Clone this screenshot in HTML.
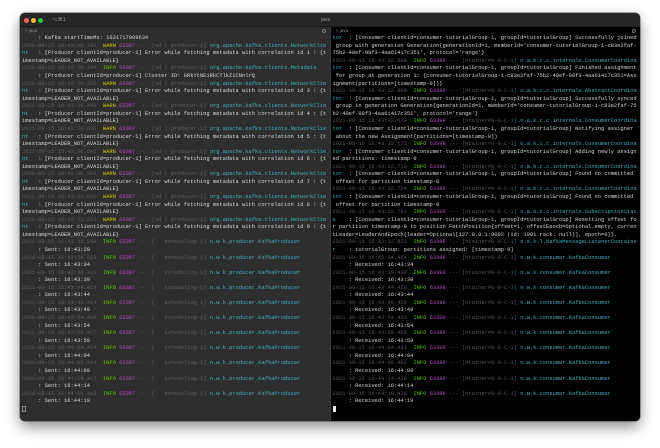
<!DOCTYPE html>
<html><head><meta charset="utf-8">
<style>
*{margin:0;padding:0;box-sizing:border-box}
html,body{width:660px;height:448px;background:#fff;overflow:hidden}
.win{position:absolute;left:20px;top:13px;width:620px;height:408px;border-radius:5px;overflow:hidden;background:#2e2e2e;box-shadow:0 6px 14px rgba(0,0,0,.45),0 0 0 .5px rgba(0,0,0,.6)}
.title{position:absolute;left:0;top:0;width:620px;height:14px;background:#262626;border-bottom:1px solid #1a1a1a}
.dot{position:absolute;top:4.5px;width:5px;height:5px;border-radius:50%}
.t{font-family:"Liberation Sans",sans-serif;color:#999;position:absolute;font-size:5px;top:3.5px}
.pane{position:absolute;top:14px;height:394px;width:310px;overflow:hidden}
.pl{left:0;background:#2e2e2e}
.pr{left:310px;background:#000;border-left:1px solid #3a3a3a}
.tab{position:absolute;top:0;left:0;right:0;height:8px;font-family:"Liberation Sans",sans-serif;font-size:4.5px;color:#888;padding-left:5px;line-height:8px}
.gear{position:absolute;top:2px;right:4px;width:4px;height:4px;border:.7px solid #777;border-radius:50%}
.txt{position:absolute;top:8.2px;font-family:"Liberation Mono",monospace;font-size:5.4px;line-height:7.57px;white-space:pre;color:#d4d4d4}
.pl .txt{left:2px}
.pr .txt{left:1.5px}
.d{color:#5c5c5c}.pr .d{color:#575757}
.w{color:#c8c800}.i{color:#5cc800}.p{color:#b04cc4}.c{color:#3cb0b8}
.cur1{display:inline-block;width:3.5px;height:6.5px;border:.7px solid #888;vertical-align:middle}
.cur2{display:inline-block;width:3.2px;height:6.5px;background:#e8e8e8;vertical-align:middle}
</style></head><body>
<div class="win">
 <div class="title">
  <div class="dot" style="left:4px;background:#ff5f57"></div>
  <div class="dot" style="left:11px;background:#febc2e"></div>
  <div class="dot" style="left:18px;background:#28c840"></div>
  <div class="t" style="left:32px">⌥⌘1</div>
  <div class="t" style="left:301px">java</div>
 </div>
 <div class="pane pl">
  <div class="tab">× java</div><div class="gear"></div>
<div class="txt">&#160;&#160;&#160;&#160;&#160;: Kafka startTimeMs: 1631717009634
<span class="d">2021-09-15 16:43:30.182 </span> <span class="w">WARN</span> <span class="p">63397</span> <span class="d">--- [ad | producer-1]</span> <span class="c">org.apache.kafka.clients.NetworkClie</span>
<span class="c">nt</span>&#160;&#160; : [Producer clientId=producer-1] Error while fetching metadata with correlation id 1 : {t
imestamp=LEADER_NOT_AVAILABLE}
<span class="d">2021-09-15 16:43:30.184 </span> <span class="i">INFO</span> <span class="p">63397</span> <span class="d">--- [ad | producer-1]</span> <span class="c">org.apache.kafka.clients.Metadata</span>
&#160;&#160;&#160;&#160;&#160;: [Producer clientId=producer-1] Cluster ID: GRkYtNE1RkCTlkZ1CNnlrQ
<span class="d">2021-09-15 16:43:30.320 </span> <span class="w">WARN</span> <span class="p">63397</span> <span class="d">--- [ad | producer-1]</span> <span class="c">org.apache.kafka.clients.NetworkClie</span>
<span class="c">nt</span>&#160;&#160; : [Producer clientId=producer-1] Error while fetching metadata with correlation id 3 : {t
imestamp=LEADER_NOT_AVAILABLE}
<span class="d">2021-09-15 16:43:30.449 </span> <span class="w">WARN</span> <span class="p">63397</span> <span class="d">--- [ad | producer-1]</span> <span class="c">org.apache.kafka.clients.NetworkClie</span>
<span class="c">nt</span>&#160;&#160; : [Producer clientId=producer-1] Error while fetching metadata with correlation id 4 : {t
imestamp=LEADER_NOT_AVAILABLE}
<span class="d">2021-09-15 16:43:30.696 </span> <span class="w">WARN</span> <span class="p">63397</span> <span class="d">--- [ad | producer-1]</span> <span class="c">org.apache.kafka.clients.NetworkClie</span>
<span class="c">nt</span>&#160;&#160; : [Producer clientId=producer-1] Error while fetching metadata with correlation id 5 : {t
imestamp=LEADER_NOT_AVAILABLE}
<span class="d">2021-09-15 16:43:30.842 </span> <span class="w">WARN</span> <span class="p">63397</span> <span class="d">--- [ad | producer-1]</span> <span class="c">org.apache.kafka.clients.NetworkClie</span>
<span class="c">nt</span>&#160;&#160; : [Producer clientId=producer-1] Error while fetching metadata with correlation id 6 : {t
imestamp=LEADER_NOT_AVAILABLE}
<span class="d">2021-09-15 16:43:30.963 </span> <span class="w">WARN</span> <span class="p">63397</span> <span class="d">--- [ad | producer-1]</span> <span class="c">org.apache.kafka.clients.NetworkClie</span>
<span class="c">nt</span>&#160;&#160; : [Producer clientId=producer-1] Error while fetching metadata with correlation id 7 : {t
imestamp=LEADER_NOT_AVAILABLE}
<span class="d">2021-09-15 16:43:31.096 </span> <span class="w">WARN</span> <span class="p">63397</span> <span class="d">--- [ad | producer-1]</span> <span class="c">org.apache.kafka.clients.NetworkClie</span>
<span class="c">nt</span>&#160;&#160; : [Producer clientId=producer-1] Error while fetching metadata with correlation id 8 : {t
imestamp=LEADER_NOT_AVAILABLE}
<span class="d">2021-09-15 16:43:31.213 </span> <span class="w">WARN</span> <span class="p">63397</span> <span class="d">--- [ad | producer-1]</span> <span class="c">org.apache.kafka.clients.NetworkClie</span>
<span class="c">nt</span>&#160;&#160; : [Producer clientId=producer-1] Error while fetching metadata with correlation id 9 : {t
imestamp=LEADER_NOT_AVAILABLE}
<span class="d">2021-09-15 16:43:31.349 </span> <span class="i">INFO</span> <span class="p">63397</span> <span class="d">--- [&#160;&#160; scheduling-1]</span> <span class="c">n.w.k.producer.KafkaProducer</span>
&#160;&#160;&#160;&#160;&#160;: Sent: 16:43:29
<span class="d">2021-09-15 16:43:34.413 </span> <span class="i">INFO</span> <span class="p">63397</span> <span class="d">--- [&#160;&#160; scheduling-1]</span> <span class="c">n.w.k.producer.KafkaProducer</span>
&#160;&#160;&#160;&#160;&#160;: Sent: 16:43:34
<span class="d">2021-09-15 16:43:39.416 </span> <span class="i">INFO</span> <span class="p">63397</span> <span class="d">--- [&#160;&#160; scheduling-1]</span> <span class="c">n.w.k.producer.KafkaProducer</span>
&#160;&#160;&#160;&#160;&#160;: Sent: 16:43:39
<span class="d">2021-09-15 16:43:44.413 </span> <span class="i">INFO</span> <span class="p">63397</span> <span class="d">--- [&#160;&#160; scheduling-1]</span> <span class="c">n.w.k.producer.KafkaProducer</span>
&#160;&#160;&#160;&#160;&#160;: Sent: 16:43:44
<span class="d">2021-09-15 16:43:49.414 </span> <span class="i">INFO</span> <span class="p">63397</span> <span class="d">--- [&#160;&#160; scheduling-1]</span> <span class="c">n.w.k.producer.KafkaProducer</span>
&#160;&#160;&#160;&#160;&#160;: Sent: 16:43:49
<span class="d">2021-09-15 16:43:54.416 </span> <span class="i">INFO</span> <span class="p">63397</span> <span class="d">--- [&#160;&#160; scheduling-1]</span> <span class="c">n.w.k.producer.KafkaProducer</span>
&#160;&#160;&#160;&#160;&#160;: Sent: 16:43:54
<span class="d">2021-09-15 16:43:59.417 </span> <span class="i">INFO</span> <span class="p">63397</span> <span class="d">--- [&#160;&#160; scheduling-1]</span> <span class="c">n.w.k.producer.KafkaProducer</span>
&#160;&#160;&#160;&#160;&#160;: Sent: 16:43:59
<span class="d">2021-09-15 16:44:04.414 </span> <span class="i">INFO</span> <span class="p">63397</span> <span class="d">--- [&#160;&#160; scheduling-1]</span> <span class="c">n.w.k.producer.KafkaProducer</span>
&#160;&#160;&#160;&#160;&#160;: Sent: 16:44:04
<span class="d">2021-09-15 16:44:09.414 </span> <span class="i">INFO</span> <span class="p">63397</span> <span class="d">--- [&#160;&#160; scheduling-1]</span> <span class="c">n.w.k.producer.KafkaProducer</span>
&#160;&#160;&#160;&#160;&#160;: Sent: 16:44:09
<span class="d">2021-09-15 16:44:14.417 </span> <span class="i">INFO</span> <span class="p">63397</span> <span class="d">--- [&#160;&#160; scheduling-1]</span> <span class="c">n.w.k.producer.KafkaProducer</span>
&#160;&#160;&#160;&#160;&#160;: Sent: 16:44:14
<span class="d">2021-09-15 16:44:19.415 </span> <span class="i">INFO</span> <span class="p">63397</span> <span class="d">--- [&#160;&#160; scheduling-1]</span> <span class="c">n.w.k.producer.KafkaProducer</span>
&#160;&#160;&#160;&#160;&#160;: Sent: 16:44:19
<span class="cur1"></span></div>
 </div>
 <div class="pane pr">
  <div class="tab">× java</div><div class="gear"></div>
<div class="txt"><span class="c">tor</span>&#160; : [Consumer clientId=consumer-tutorialGroup-1, groupId=tutorialGroup] Successfully joined
&#160;group with generation Generation{generationId=1, memberId='consumer-tutorialGroup-1-c83e2faf-
75b2-40ef-98f3-4aa61417c351', protocol='range'}
<span class="d">2021-09-15 16:43:32.608 </span> <span class="i">INFO</span> <span class="p">63398</span> <span class="d">--- [ntainer#0-0-C-1]</span> <span class="c">o.a.k.c.c.internals.ConsumerCoordina</span>
<span class="c">tor</span>&#160; : [Consumer clientId=consumer-tutorialGroup-1, groupId=tutorialGroup] Finished assignment
&#160;for group at generation 1: {consumer-tutorialGroup-1-c83e2faf-75b2-40ef-98f3-4aa61417c351=Ass
ignment(partitions=[timestamp-0])}
<span class="d">2021-09-15 16:43:32.669 </span> <span class="i">INFO</span> <span class="p">63398</span> <span class="d">--- [ntainer#0-0-C-1]</span> <span class="c">o.a.k.c.c.internals.AbstractCoordina</span>
<span class="c">tor</span>&#160; : [Consumer clientId=consumer-tutorialGroup-1, groupId=tutorialGroup] Successfully synced
&#160;group in generation Generation{generationId=1, memberId='consumer-tutorialGroup-1-c83e2faf-75
b2-40ef-98f3-4aa61417c351', protocol='range'}
<span class="d">2021-09-15 16:43:32.670 </span> <span class="i">INFO</span> <span class="p">63398</span> <span class="d">--- [ntainer#0-0-C-1]</span> <span class="c">o.a.k.c.c.internals.ConsumerCoordina</span>
<span class="c">tor</span>&#160; : [Consumer clientId=consumer-tutorialGroup-1, groupId=tutorialGroup] Notifying assigner
&#160;about the new Assignment(partitions=[timestamp-0])
<span class="d">2021-09-15 16:43:32.673 </span> <span class="i">INFO</span> <span class="p">63398</span> <span class="d">--- [ntainer#0-0-C-1]</span> <span class="c">o.a.k.c.c.internals.ConsumerCoordina</span>
<span class="c">tor</span>&#160; : [Consumer clientId=consumer-tutorialGroup-1, groupId=tutorialGroup] Adding newly assign
ed partitions: timestamp-0
<span class="d">2021-09-15 16:43:32.710 </span> <span class="i">INFO</span> <span class="p">63398</span> <span class="d">--- [ntainer#0-0-C-1]</span> <span class="c">o.a.k.c.c.internals.ConsumerCoordina</span>
<span class="c">tor</span>&#160; : [Consumer clientId=consumer-tutorialGroup-1, groupId=tutorialGroup] Found no committed
&#160;offset for partition timestamp-0
<span class="d">2021-09-15 16:43:32.724 </span> <span class="i">INFO</span> <span class="p">63398</span> <span class="d">--- [ntainer#0-0-C-1]</span> <span class="c">o.a.k.c.c.internals.ConsumerCoordina</span>
<span class="c">tor</span>&#160; : [Consumer clientId=consumer-tutorialGroup-1, groupId=tutorialGroup] Found no committed
&#160;offset for partition timestamp-0
<span class="d">2021-09-15 16:43:32.762 </span> <span class="i">INFO</span> <span class="p">63398</span> <span class="d">--- [ntainer#0-0-C-1]</span> <span class="c">o.a.k.c.c.internals.SubscriptionStat</span>
<span class="c">e</span>&#160;&#160;&#160; : [Consumer clientId=consumer-tutorialGroup-1, groupId=tutorialGroup] Resetting offset fo
r partition timestamp-0 to position FetchPosition{offset=1, offsetEpoch=Optional.empty, curren
tLeader=LeaderAndEpoch{leader=Optional[127.0.0.1:9092 (id: 1001 rack: null)], epoch=0}}.
<span class="d">2021-09-15 16:43:32.823 </span> <span class="i">INFO</span> <span class="p">63398</span> <span class="d">--- [ntainer#0-0-C-1]</span> <span class="c">o.s.k.l.KafkaMessageListenerContaine</span>
<span class="c">r</span>&#160;&#160;&#160; : tutorialGroup: partitions assigned: [timestamp-0]
<span class="d">2021-09-15 16:43:34.464 </span> <span class="i">INFO</span> <span class="p">63398</span> <span class="d">--- [ntainer#0-0-C-1]</span> <span class="c">n.w.k.consumer.KafkaConsumer</span>
&#160;&#160;&#160;&#160;&#160;: Received: 16:43:34
<span class="d">2021-09-15 16:43:39.438 </span> <span class="i">INFO</span> <span class="p">63398</span> <span class="d">--- [ntainer#0-0-C-1]</span> <span class="c">n.w.k.consumer.KafkaConsumer</span>
&#160;&#160;&#160;&#160;&#160;: Received: 16:43:39
<span class="d">2021-09-15 16:43:44.428 </span> <span class="i">INFO</span> <span class="p">63398</span> <span class="d">--- [ntainer#0-0-C-1]</span> <span class="c">n.w.k.consumer.KafkaConsumer</span>
&#160;&#160;&#160;&#160;&#160;: Received: 16:43:44
<span class="d">2021-09-15 16:43:49.429 </span> <span class="i">INFO</span> <span class="p">63398</span> <span class="d">--- [ntainer#0-0-C-1]</span> <span class="c">n.w.k.consumer.KafkaConsumer</span>
&#160;&#160;&#160;&#160;&#160;: Received: 16:43:49
<span class="d">2021-09-15 16:43:54.433 </span> <span class="i">INFO</span> <span class="p">63398</span> <span class="d">--- [ntainer#0-0-C-1]</span> <span class="c">n.w.k.consumer.KafkaConsumer</span>
&#160;&#160;&#160;&#160;&#160;: Received: 16:43:54
<span class="d">2021-09-15 16:43:59.459 </span> <span class="i">INFO</span> <span class="p">63398</span> <span class="d">--- [ntainer#0-0-C-1]</span> <span class="c">n.w.k.consumer.KafkaConsumer</span>
&#160;&#160;&#160;&#160;&#160;: Received: 16:43:59
<span class="d">2021-09-15 16:44:04.431 </span> <span class="i">INFO</span> <span class="p">63398</span> <span class="d">--- [ntainer#0-0-C-1]</span> <span class="c">n.w.k.consumer.KafkaConsumer</span>
&#160;&#160;&#160;&#160;&#160;: Received: 16:44:04
<span class="d">2021-09-15 16:44:09.462 </span> <span class="i">INFO</span> <span class="p">63398</span> <span class="d">--- [ntainer#0-0-C-1]</span> <span class="c">n.w.k.consumer.KafkaConsumer</span>
&#160;&#160;&#160;&#160;&#160;: Received: 16:44:09
<span class="d">2021-09-15 16:44:14.420 </span> <span class="i">INFO</span> <span class="p">63398</span> <span class="d">--- [ntainer#0-0-C-1]</span> <span class="c">n.w.k.consumer.KafkaConsumer</span>
&#160;&#160;&#160;&#160;&#160;: Received: 16:44:14
<span class="d">2021-09-15 16:44:19.428 </span> <span class="i">INFO</span> <span class="p">63398</span> <span class="d">--- [ntainer#0-0-C-1]</span> <span class="c">n.w.k.consumer.KafkaConsumer</span>
&#160;&#160;&#160;&#160;&#160;: Received: 16:44:19
<span class="cur2"></span></div>
 </div>
</div>
</body></html>
